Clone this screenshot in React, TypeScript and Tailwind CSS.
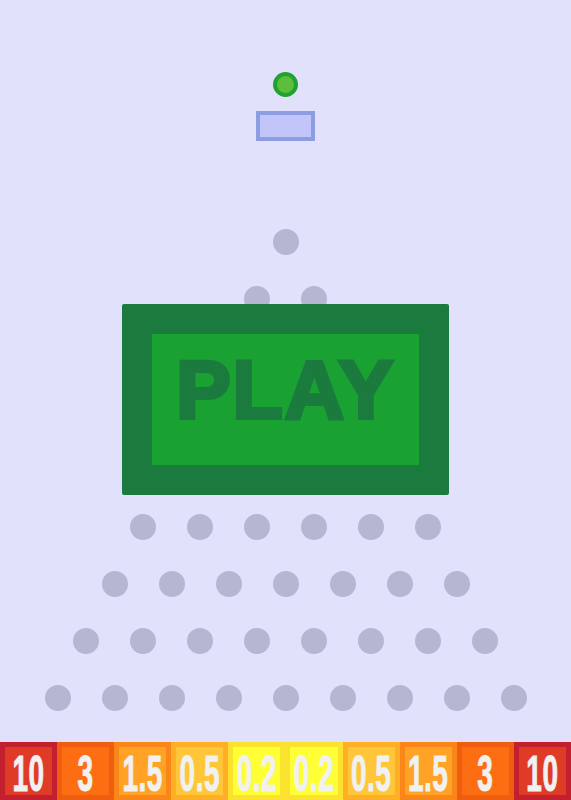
import React from "react";

const ROWS = 9;
const PEG_ROWS = Array.from({ length: ROWS }, (_, i) => i + 1);

type Slot = { label: string; edge: string; fill: string };

const SLOTS: Slot[] = [
  { label: "10", edge: "border-[#c21f2f]", fill: "bg-[#df3b27]" },
  { label: "3", edge: "border-[#ef5d0f]", fill: "bg-[#fd6d12]" },
  { label: "1.5", edge: "border-[#fa861a]", fill: "bg-[#ffa226]" },
  { label: "0.5", edge: "border-[#ffaf26]", fill: "bg-[#ffc63a]" },
  { label: "0.2", edge: "border-[#fbe22e]", fill: "bg-[#ffff36]" },
  { label: "0.2", edge: "border-[#fbe22e]", fill: "bg-[#ffff36]" },
  { label: "0.5", edge: "border-[#ffaf26]", fill: "bg-[#ffc63a]" },
  { label: "1.5", edge: "border-[#fa861a]", fill: "bg-[#ffa226]" },
  { label: "3", edge: "border-[#ef5d0f]", fill: "bg-[#fd6d12]" },
  { label: "10", edge: "border-[#c21f2f]", fill: "bg-[#df3b27]" },
];

function Peg() {
  return <div className="h-[26px] w-[26px] shrink-0 rounded-full bg-[#b6b6d2]" />;
}

function SlotCell({ slot }: { slot: Slot }) {
  return (
    <div
      className={`flex h-[58px] min-w-0 flex-1 basis-0 items-center justify-center border-[5px] pt-[7px] ${slot.edge} ${slot.fill}`}
    >
      {/* tall, narrow numerals: small type stretched vertically */}
      <span
        className="inline-block scale-y-[1.8] text-[28px] font-bold leading-none tracking-[0.5px] text-[#f1f1f1] [-webkit-text-stroke:0.6px_#f1f1f1]"
        style={{ fontFamily: '"Liberation Sans", Arial, sans-serif' }}
      >
        {slot.label}
      </span>
    </div>
  );
}

export default function App() {
  return (
    <div className="relative flex h-[800px] w-full flex-col items-center overflow-hidden bg-[#e1e1fb]">
      {/* ball and launcher */}
      <div className="mt-[72px] h-[25px] w-[25px] rounded-full border-[4px] border-[#21a130] bg-[#5dbd3d]" />
      <div className="mt-[14px] h-[30px] w-[59px] border-[4px] border-[#8d9de2] bg-[#c1c5f9]" />

      {/* peg triangle */}
      <div className="mt-[88px] flex flex-col items-center gap-[31px]">
        {PEG_ROWS.map((n) => (
          <div key={n} className="flex gap-[31px]">
            {Array.from({ length: n }, (_, j) => (
              <Peg key={j} />
            ))}
          </div>
        ))}
      </div>

      {/* payout slots */}
      <div className="mt-[31px] flex w-full">
        {SLOTS.map((s, i) => (
          <SlotCell key={i} slot={s} />
        ))}
      </div>

      {/* play overlay */}
      <div className="absolute left-[122px] top-[304px] h-[191px] w-[327px] rounded-[2px] bg-[#1b7b3e] p-[30px]">
        <div className="flex h-full w-full justify-center bg-[#19a132] pt-[15px]">
          <span
            className="text-[82px] font-bold leading-none tracking-[2px] text-[#1b7b3e] [-webkit-text-stroke:4px_#1b7b3e]"
            style={{ fontFamily: '"Liberation Sans", Arial, sans-serif' }}
          >
            PLAY
          </span>
        </div>
      </div>
    </div>
  );
}
